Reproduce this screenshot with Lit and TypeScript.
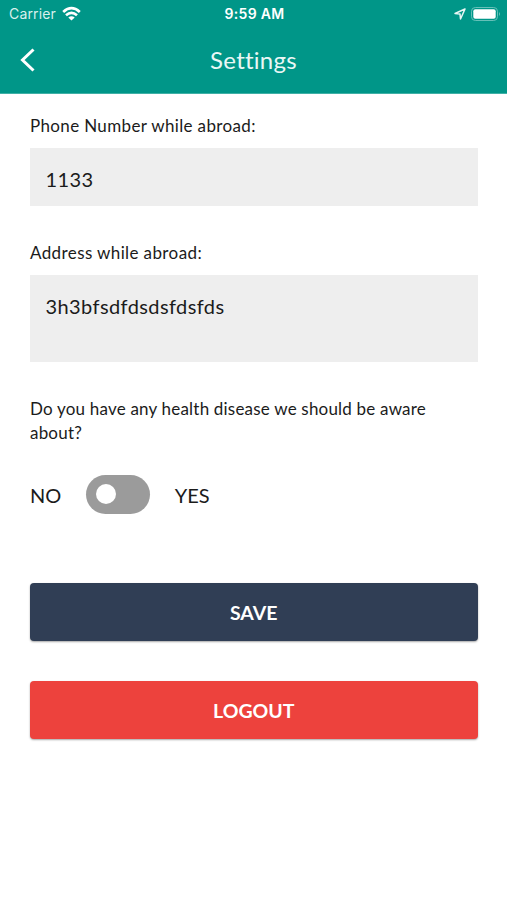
import { LitElement, html, css } from "lit";
import { customElement } from "lit/decorators.js";

@customElement("app-root")
export class AppRoot extends LitElement {
  static styles = css`
    :host { display: block; height: 900px; background: #fff; color: #1b1b1b; font-family: Lato, sans-serif; overflow: hidden; }
    * { box-sizing: border-box; }
    svg { display: block; }
    header { height: 94px; background: #009688; color: #fff; border-bottom: 1px solid #40b0a6; }
    .status { height: 27px; display: grid; grid-template-columns: 1fr auto 1fr; align-items: center; padding: 0 6px 0 9px; font-family: Inter, sans-serif; font-size: 14px; }
    .left, .right { display: flex; align-items: center; }
    .left { gap: 6px; color: #d9f0ed; letter-spacing: 0.15px; }
    .wifi { margin-top: -1px; }
    .right { justify-content: flex-end; gap: 5px; }
    .time { font-weight: 600; font-size: 14px; letter-spacing: 0.3px; margin-right: 1px; }
    .bar { height: 65px; display: grid; grid-template-columns: 60px 1fr 60px; align-items: center; text-align: center; }
    .back { margin-left: 20px; }
    .title { font-size: 24px; letter-spacing: 0.25px; color: #e9f7f5; }
    main { padding: 19px 29.500px 0 30px; }
    .label { font-size: 17px; line-height: 25px; letter-spacing: 0.35px; }
    .address { letter-spacing: 0.39px; }
    .question { letter-spacing: 0.2px; line-height: 24px; }
    .field { margin-top: 10px; height: 58px; padding: 19px 15.500px; background: #eee; font-size: 20px; line-height: 24px; letter-spacing: 0.4px; }
    .area { height: 87px; }
    .gap { margin-top: 34px; }
    .gap.question { margin-top: 35px; }
    .choice { display: flex; align-items: center; margin-top: 29px; height: 40px; font-size: 20px; }
    .choice span { padding-top: 2px; }
    .toggle { width: 64px; height: 39px; margin: 0 24.500px 0 25px; border-radius: 20px; background: #9b9b9b; padding: 9px 10px; }
    .knob { width: 20px; height: 20px; border-radius: 50%; background: #fff; }
    .btn { height: 58px; display: flex; align-items: center; justify-content: center; border-radius: 4px; color: #fff; font-size: 19.500px; font-weight: 700; box-shadow: 0 1px 2px rgba(0, 0, 0, 0.35); }
    .save { margin-top: 69px; background: #303e55; }
    .logout { margin-top: 40px; background: #ed423d; }
  `;
  render() {
    return html`
      <header>
        <div class="status">
          <div class="left"><span>Carrier</span>
            <svg class="wifi" width="19" height="15" viewBox="0 0 19 15" fill="none" stroke="#fff" stroke-width="2.700"><path d="M1.200 5.900Q9.500-1.700 17.800 5.900M4 9.200Q9.500 4.400 15 9.200"/><path d="M6.300 11.500Q9.500 8.900 12.700 11.500L9.500 14.500Z" fill="#fff" stroke="none"/></svg>
          </div>
          <span class="time">9:59 AM</span>
          <div class="right">
            <svg width="12" height="12" viewBox="0 0 12 12" fill="none" stroke="#e9f7f5" stroke-width="1.500" stroke-linejoin="round"><path d="M11 1 1 5.500 6 6 6.500 11Z"/></svg>
            <svg width="30" height="14" viewBox="0 0 30 14"><rect x=".5" y=".5" width="26" height="13" rx="3.800" fill="none" stroke="#66c0b8"/><rect x="2.300" y="2.300" width="22.400" height="9.400" rx="2" fill="#fff"/><path d="M28 5Q30 7 28 9Z" fill="#66c0b8"/></svg>
          </div>
        </div>
        <div class="bar">
          <svg class="back" width="15" height="24" viewBox="0 0 15 24" fill="none" stroke="#fff" stroke-width="3"><path d="M13.500 1.500 2.500 12 13.500 22.500"/></svg>
          <span class="title">Settings</span>
        </div>
      </header>
      <main>
        <div class="label">Phone Number while abroad:</div>
        <div class="field">1133</div>
        <div class="label gap address">Address while abroad:</div>
        <div class="field area">3h3bfsdfdsdsfdsfds</div>
        <div class="label gap question">Do you have any health disease we should be aware about?</div>
        <div class="choice"><span>NO</span><div class="toggle"><div class="knob"></div></div><span>YES</span></div>
        <div class="btn save">SAVE</div>
        <div class="btn logout">LOGOUT</div>
      </main>`;
  }
}
